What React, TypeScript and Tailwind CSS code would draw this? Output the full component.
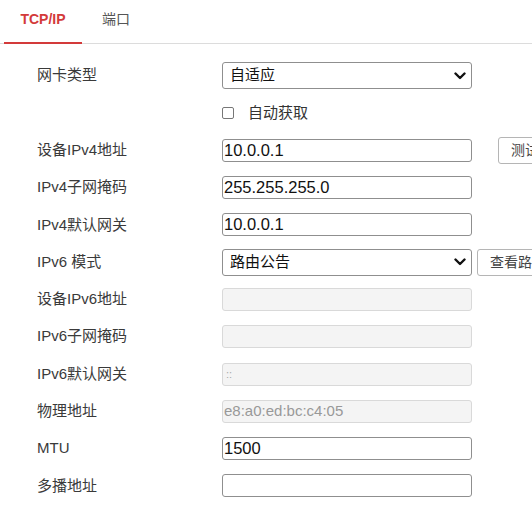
import React from "react";

const font = { fontFamily: '"Liberation Sans", "Noto Sans CJK SC", sans-serif' };

function Chevron() {
  return (
    <svg width="12" height="8" viewBox="0 0 12 8" className="absolute right-[5px] top-1/2 -translate-y-1/2 pointer-events-none">
      <path d="M1.5 1.5 L6 6 L10.5 1.5" fill="none" stroke="#111" strokeWidth="2.4" strokeLinecap="round" strokeLinejoin="round" />
    </svg>
  );
}

function Row({ label, children }: { label?: string; children: React.ReactNode }) {
  return (
    <div className="flex items-center h-[37.3px]">
      <div className="w-[185px] shrink-0 text-[15px] text-[#3a3a3a] pl-[37px] box-content whitespace-nowrap">{label}</div>
      <div className="flex items-center">{children}</div>
    </div>
  );
}

function TextBox({ value, disabled, small }: { value?: string; disabled?: boolean; small?: boolean }) {
  return (
    <div
      className={
        "w-[250px] h-[23px] rounded-[3px] flex items-center pl-[1px] whitespace-nowrap " +
        (disabled
          ? "bg-[#f4f4f4] border border-[#d9d9d9] text-[#999] " + (small ? "text-[11px] text-[#aaa] pl-[3px]" : "text-[15px]")
          : "bg-white border border-[#8f8f8f] text-[#111] text-[16.5px]")
      }
    >
      {value}
    </div>
  );
}

function SelectBox({ value }: { value: string }) {
  return (
    <div className="relative w-[250px] h-[27px] rounded-[3px] border border-[#8f8f8f] bg-white flex items-center pl-[7px] text-[15px] text-[#111]">
      {value}
      <Chevron />
    </div>
  );
}

function Btn({ text, ml }: { text: string; ml: string }) {
  return (
    <div className={"h-[27px] rounded-[3px] border border-[#b5b5b5] bg-white flex items-center px-[12px] text-[14px] text-[#444] whitespace-nowrap " + ml}>
      {text}
    </div>
  );
}

export default function App() {
  return (
    <div className="w-[532px] h-[508px] overflow-hidden bg-white" style={font}>
      <div className="flex items-end h-[44px] border-b border-[#dcdcdc] relative">
        <div className="relative w-[78px] ml-[4px] h-[44px] flex items-center justify-center">
          <span className="text-[14px] font-bold text-[#d33a3a] -mt-[3px]">TCP/IP</span>
          <div className="absolute left-0 right-0 bottom-[-1px] h-[2px] bg-[#d33a3a]" />
        </div>
        <div className="h-[44px] ml-[20px] flex items-center">
          <span className="text-[14px] text-[#555] -mt-[3px]">端口</span>
        </div>
      </div>
      <div className="pt-[13px]">
        <Row label="网卡类型"><SelectBox value="自适应" /></Row>
        <Row>
          <div className="flex items-center">
            <div className="w-[12px] h-[12px] border border-[#777] rounded-[2px] bg-white" />
            <span className="ml-[14px] text-[15px] text-[#333]">自动获取</span>
          </div>
        </Row>
        <Row label="设备IPv4地址">
          <TextBox value="10.0.0.1" />
          <Btn text="测试" ml="ml-[26px]" />
        </Row>
        <Row label="IPv4子网掩码"><TextBox value="255.255.255.0" /></Row>
        <Row label="IPv4默认网关"><TextBox value="10.0.0.1" /></Row>
        <Row label="IPv6 模式">
          <SelectBox value="路由公告" />
          <Btn text="查看路由" ml="ml-[5px]" />
        </Row>
        <Row label="设备IPv6地址"><TextBox disabled /></Row>
        <Row label="IPv6子网掩码"><TextBox disabled /></Row>
        <Row label="IPv6默认网关"><TextBox disabled small value="::" /></Row>
        <Row label="物理地址"><TextBox disabled value="e8:a0:ed:bc:c4:05" /></Row>
        <Row label="MTU"><TextBox value="1500" /></Row>
        <Row label="多播地址"><TextBox /></Row>
      </div>
    </div>
  );
}
